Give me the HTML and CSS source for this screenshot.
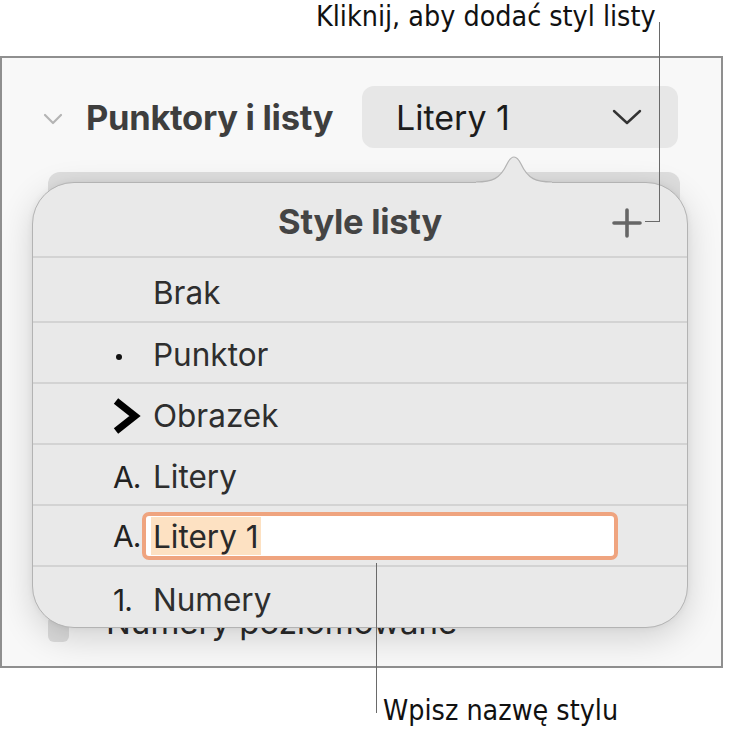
FILE: index.html
```html
<!DOCTYPE html>
<html>
    <head>
        <meta charset="utf-8">
        <title>Style listy</title>
        <link rel="stylesheet" href="styles.css">
    </head>
    <body>
        <div class="page">
            <div class="note-top">Kliknij, aby dodać styl listy</div>

            <section class="panel">
                <div class="section-head">
                    <svg class="toggle" width="22" height="12" viewBox="0 0 22 12">
                        <path d="M3 2 L11 10 L19 2" fill="none" stroke="#b4b4b4" stroke-width="2.2" stroke-linecap="round" stroke-linejoin="round"/>
                    </svg>
                    <h2 class="section-title">Punktory i listy</h2>
                    <div class="dropdown">
                        <span>Litery 1</span>
                        <svg width="30" height="18" viewBox="0 0 30 18">
                            <path d="M2 3 L15 15 L28 3" fill="none" stroke="#333" stroke-width="2.4" stroke-linecap="round" stroke-linejoin="round"/>
                        </svg>
                    </div>
                </div>
                <div class="hidden-control"></div>
                <div class="check-row">
                    <span class="checkbox"></span>
                    <span class="check-label">Numery poziomowane</span>
                </div>
            </section>

            <div class="popover">
                <div class="pop-head">
                    <span class="pop-title">Style listy</span>
                    <svg class="plus" width="32" height="32" viewBox="0 0 32 32">
                        <path d="M16 3 V29 M3 16 H29" stroke="#666" stroke-width="3.6" stroke-linecap="round"/>
                    </svg>
                </div>
                <ul class="styles">
                    <li class="style-row first"><span class="marker"></span><span class="label">Brak</span></li>
                    <li class="style-row"><span class="marker"><i class="dot"></i></span><span class="label">Punktor</span></li>
                    <li class="style-row">
                        <span class="marker">
                            <svg width="30" height="38" viewBox="0 0 30 38">
                                <path d="M3 4 L22 19 L3 34" fill="none" stroke="#000" stroke-width="7" stroke-linejoin="miter"/>
                            </svg>
                        </span>
                        <span class="label">Obrazek</span>
                    </li>
                    <li class="style-row"><span class="marker">A.</span><span class="label">Litery</span></li>
                    <li class="style-row editing">
                        <span class="marker">A.</span>
                        <div class="name-field"><span class="selected">Litery 1</span></div>
                    </li>
                    <li class="style-row last"><span class="marker">1.</span><span class="label">Numery</span></li>
                </ul>
            </div>
            <svg class="pop-arrow" width="76" height="32" viewBox="0 0 76 32">
                <path d="M0 30 C16 30 24 27 31 12 Q38 -2 45 12 C52 27 60 30 76 30 L76 32 L0 32 Z" fill="#e9e9e9"/>
                <path d="M0 30 C16 30 24 27 31 12 Q38 -2 45 12 C52 27 60 30 76 30" fill="none" stroke="#b3b3b3" stroke-width="1.2"/>
            </svg>

            <div class="leader-top"></div>
            <div class="leader-bottom"></div>
            <div class="note-bottom">Wpisz nazwę stylu</div>
        </div>
    </body>
</html>
```

FILE: styles.css
```css
body {
    margin: 0;
    background: #ffffff;
    font-family: 'Inter', 'Roboto', sans-serif;
}

.page {
    position: relative;
    width: 729px;
    height: 729px;
    overflow: hidden;
}

.note-top,
.note-bottom {
    font-family: 'Liberation Sans Narrow', 'DejaVu Sans Condensed', sans-serif;
    font-size: 28.4px;
    color: #111;
    white-space: nowrap;
}

.note-top {
    height: 56px;
    padding-left: 316px;
    line-height: 34px;
    box-sizing: border-box;
}

.panel {
    width: 723px;
    height: 612px;
    box-sizing: border-box;
    border: 2px solid #8f8f8f;
    background: #f8f8f8;
    padding: 28px 43px 0 40px;
}

.section-head {
    display: flex;
    align-items: center;
    height: 62px;
}

.toggle {
    margin-top: 4px;
}

.section-title {
    margin: 0 0 0 22px;
    font-size: 34.5px;
    font-weight: 700;
    color: #3e3e3e;
    letter-spacing: -0.3px;
}

.dropdown {
    margin-left: auto;
    width: 316px;
    height: 62px;
    box-sizing: border-box;
    border-radius: 12px;
    background: #e7e7e7;
    display: flex;
    align-items: center;
    justify-content: space-between;
    padding: 0 36px 0 34px;
    font-size: 34px;
    color: #1c1c1c;
}

.hidden-control {
    margin: 24px 0 0 6px;
    width: 632px;
    height: 60px;
    border-radius: 12px;
    background: #dedede;
}

.check-row {
    display: flex;
    align-items: center;
    margin: 383px 0 0 6px;
    height: 28px;
}

.checkbox {
    width: 21px;
    height: 26px;
    border-radius: 6px;
    background: #dcdcdc;
}

.check-label {
    margin: 0 0 14px 37px;
    line-height: 28px;
    font-size: 33px;
    color: #2a2a2a;
}

.popover {
    position: absolute;
    left: 32px;
    top: 182px;
    width: 656px;
    height: 446px;
    box-sizing: border-box;
    border: 1px solid #b3b3b3;
    border-radius: 42px;
    background: #e9e9e9;
    box-shadow: 0 10px 34px rgba(0, 0, 0, 0.16), 0 0 6px rgba(0, 0, 0, 0.06);
    overflow: hidden;
}

.pop-arrow {
    position: absolute;
    left: 476px;
    top: 152px;
}

.pop-head {
    position: relative;
    height: 75px;
    display: flex;
    align-items: center;
    justify-content: center;
    border-bottom: 2px solid #d3d3d3;
    box-sizing: border-box;
}

.pop-title {
    font-size: 34.5px;
    font-weight: 700;
    color: #444;
    letter-spacing: -0.3px;
    margin-top: 4px;
}

.plus {
    position: absolute;
    right: 44px;
    top: 24px;
}

.styles {
    list-style: none;
    margin: 0;
    padding: 0;
}

.style-row {
    display: flex;
    align-items: center;
    height: 61px;
    box-sizing: border-box;
    padding: 4px 0 0 80px;
    border-bottom: 2px solid #d3d3d3;
    font-size: 31.5px;
    color: #2e2e2e;
}

.style-row.first {
    height: 65px;
    padding-top: 6px;
}

.style-row.last {
    border-bottom: none;
}

.marker {
    width: 40px;
    flex-shrink: 0;
    display: flex;
    align-items: center;
    font-size: 30px;
    letter-spacing: -1px;
    color: #222;
}

.dot {
    display: block;
    width: 6px;
    height: 6px;
    border-radius: 50%;
    background: #111;
    margin: 4px 0 0 3px;
}

.editing {
    padding-top: 0;
}

.name-field {
    margin-left: -11px;
    width: 476px;
    height: 48px;
    flex-shrink: 0;
    box-sizing: border-box;
    border: 4px solid #efa47f;
    border-radius: 7px;
    background: #fff;
    display: flex;
    align-items: stretch;
    padding: 1px 0 1px 5px;
}

.selected {
    background: #fde1c2;
    padding: 0 2px;
    line-height: 40px;
    color: #2a2a2a;
}

.leader-top {
    position: absolute;
    left: 645px;
    top: 22px;
    width: 14px;
    height: 199px;
    border-right: 1.5px solid #6a6a6a;
    border-bottom: 1.5px solid #6a6a6a;
}

.leader-bottom {
    position: absolute;
    left: 376px;
    top: 563px;
    width: 0;
    height: 150px;
    border-left: 1.5px solid #6a6a6a;
}

.note-bottom {
    position: absolute;
    left: 383px;
    top: 694px;
    line-height: 34px;
}
```
